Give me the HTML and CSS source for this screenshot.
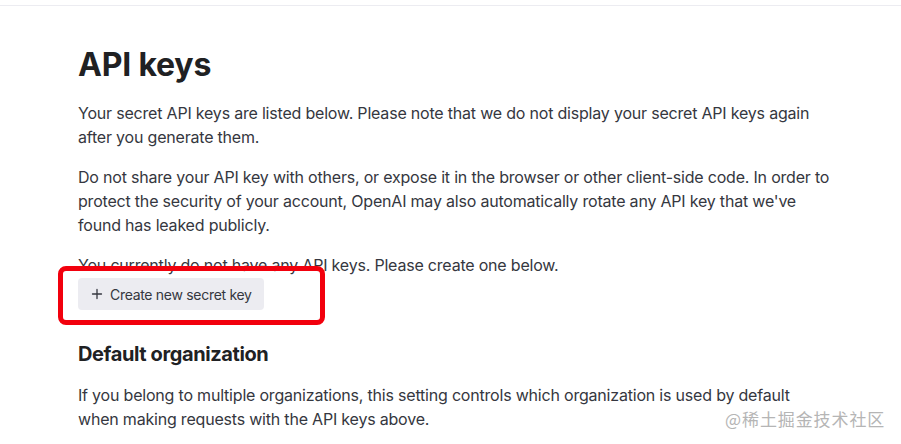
FILE: index.html
```html
<!DOCTYPE html>
<html lang="en">
<head>
<meta charset="utf-8">
<title>API keys</title>
<link rel="stylesheet" href="styles.css">
</head>
<body>
<div class="topbar"></div>
<main class="page">
  <h1 class="title">API keys</h1>
  <p class="text">Your secret API keys are listed below. Please note that we do not display your secret API keys again after you generate them.</p>
  <p class="text">Do not share your API key with others, or expose it in the browser or other client-side code. In order to protect the security of your account, OpenAI may also automatically rotate any API key that we've found has leaked publicly.</p>
  <p class="text text-tight">You currently do not have any API keys. Please create one below.</p>
  <div class="action">
    <button class="btn" type="button"><svg class="btn-icon" viewBox="0 0 12 12" width="12" height="12" aria-hidden="true"><path d="M6 1.5v9M1.5 6h9" stroke="currentColor" stroke-width="1.3" fill="none" stroke-linecap="round"/></svg><span>Create new secret key</span></button>
    <div class="highlight"></div>
  </div>
  <h2 class="subtitle">Default organization</h2>
  <p class="text text-narrow">If you belong to multiple organizations, this setting controls which organization is used by default when making requests with the API keys above.</p>
</main>
<div class="watermark">@稀土掘金技术社区</div>
</body>
</html>
```
FILE: styles.css
```css
* { box-sizing: border-box; }
html, body { margin: 0; padding: 0; background: #fff; }
body {
  font-family: Inter, "Noto Sans", "Liberation Sans", sans-serif;
  color: #353740;
  width: 901px;
  height: 444px;
  overflow: hidden;
  position: relative;
}
.topbar {
  height: 6px;
  border-bottom: 1px solid #ececf1;
}
.page {
  padding: 39px 0 0 78px;
  width: 840px;
}
.title {
  margin: 0 0 16px;
  font-size: 32px;
  line-height: 40px;
  font-weight: 700;
  color: #202123;
  letter-spacing: -0.2px;
}
.text {
  margin: 0 0 16px;
  font-size: 16px;
  line-height: 24px;
  width: 760px;
  letter-spacing: -0.2px;
}
.text-tight { margin-bottom: 1px; }
.text-narrow { width: 735px; }
.action {
  position: relative;
  height: 32px;
}
.btn {
  display: inline-flex;
  align-items: center;
  gap: 7px;
  height: 32px;
  padding: 0 12px 0 13px;
  border: 0;
  border-radius: 4px;
  background: #ececf1;
  color: #353740;
  font-family: inherit;
  font-size: 14px;
  letter-spacing: -0.3px;
}
.btn-icon { display: block; }
.highlight {
  position: absolute;
  left: -20px;
  top: -12px;
  width: 267px;
  height: 59px;
  border: 5px solid #f2000d;
  border-radius: 8px;
}
.subtitle {
  margin: 30px 0 15px;
  font-size: 20px;
  line-height: 28px;
  font-weight: 700;
  color: #202123;
  letter-spacing: -0.4px;
}
.watermark {
  position: absolute;
  left: 725px;
  top: 406px;
  font-family: "Noto Sans CJK SC", sans-serif;
  font-size: 17px;
  color: #b5b5b5;
  letter-spacing: 0.9px;
}
```
